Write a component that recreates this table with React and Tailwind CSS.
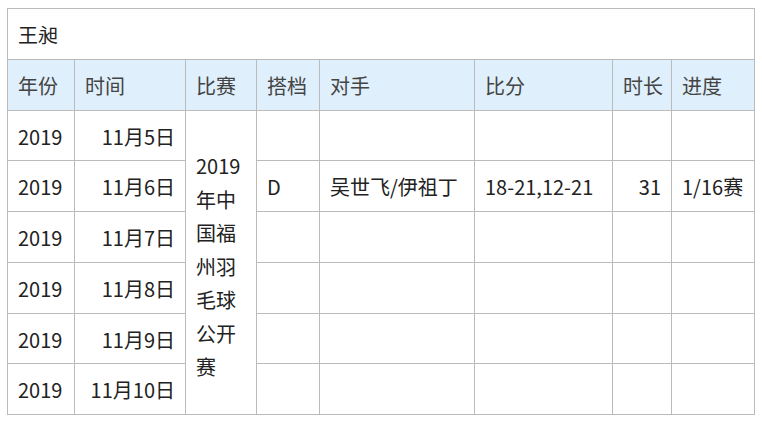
import React from "react";

const rows = [
  { y: "2019", d: "11月5日" },
  { y: "2019", d: "11月6日", p: "D", o: "吴世飞/伊祖丁", s: "18-21,12-21", t: "31", r: "1/16赛" },
  { y: "2019", d: "11月7日" },
  { y: "2019", d: "11月8日" },
  { y: "2019", d: "11月9日" },
  { y: "2019", d: "11月10日" },
];

const td = "border border-[#bbbbbb] px-[10px] pt-[9px] pb-[7px] leading-[33.75px] align-middle whitespace-nowrap";

export default function App() {
  return (
    <div
      className="bg-white w-[762px] h-[423px] pt-[8px] pl-[7px] text-[20px] text-[#222222]"
      style={{ fontFamily: '"Noto Sans CJK SC", "Noto Sans", sans-serif' }}
    >
      <table className="table-fixed border-collapse w-[747px]">
        <colgroup>
          <col className="w-[67px]" />
          <col className="w-[111px]" />
          <col className="w-[71px]" />
          <col className="w-[63px]" />
          <col className="w-[155px]" />
          <col className="w-[138px]" />
          <col className="w-[59px]" />
          <col className="w-[83px]" />
        </colgroup>
        <tbody>
          <tr>
            <td colSpan={8} className={td + " text-left"}>王昶</td>
          </tr>
          <tr className="bg-[#dff0fc] text-[#444444]">
            <td className={td}>年份</td>
            <td className={td}>时间</td>
            <td className={td}>比赛</td>
            <td className={td}>搭档</td>
            <td className={td}>对手</td>
            <td className={td}>比分</td>
            <td className={td}>时长</td>
            <td className={td}>进度</td>
          </tr>
          {rows.map((r, i) => (
            <tr key={i}>
              <td className={td}>{r.y}</td>
              <td className={td + " text-right"}>{r.d}</td>
              {i === 0 && (
                <td
                  rowSpan={6}
                  className="border border-[#bbbbbb] px-[10px] pt-[12px] pb-[4px] leading-[33.5px] align-middle break-all"
                >
                  2019年中国福州羽毛球公开赛
                </td>
              )}
              <td className={td}>{r.p || ""}</td>
              <td className={td}>{r.o || ""}</td>
              <td className={td}>{r.s || ""}</td>
              <td className={td + " text-right"}>{r.t || ""}</td>
              <td className={td}>{r.r || ""}</td>
            </tr>
          ))}
        </tbody>
      </table>
    </div>
  );
}
